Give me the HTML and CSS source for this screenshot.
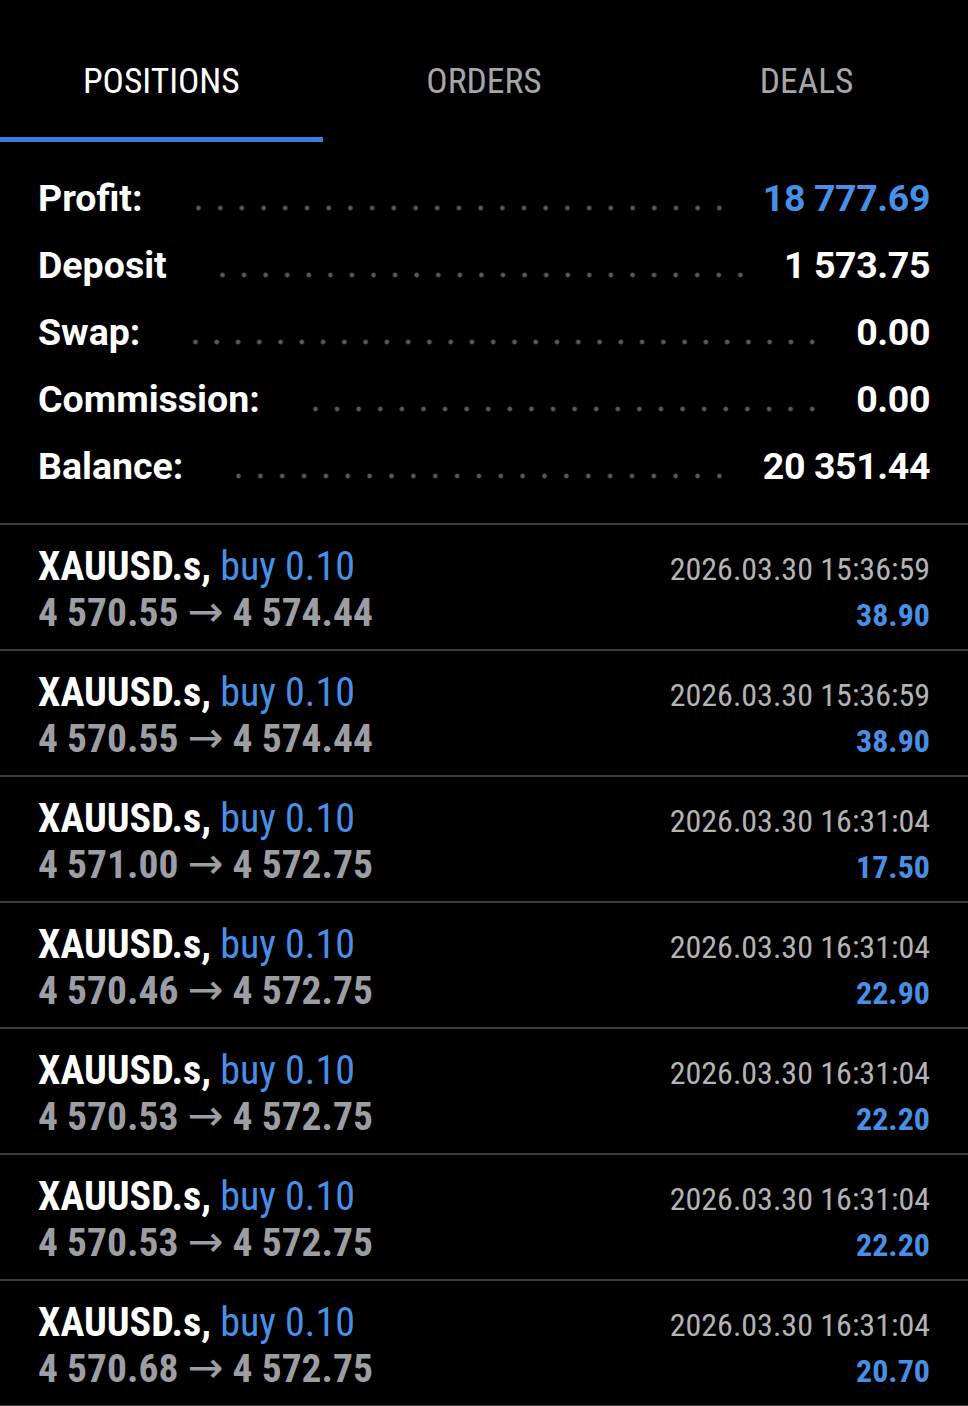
FILE: index.html
```html
<!DOCTYPE html>
<html>
<head>
    <title>Positions</title>
    <link rel="stylesheet" href="styles.css">
</head>
<body>
    <div class="tabs">
        <div class="tab active">POSITIONS</div>
        <div class="tab">ORDERS</div>
        <div class="tab">DEALS</div>
    </div>

    <div class="summary">
        <div class="sum-row"><span class="label">Profit:</span><span class="leader"></span><span class="value blue">18 777.69</span></div>
        <div class="sum-row"><span class="label">Deposit</span><span class="leader"></span><span class="value">1 573.75</span></div>
        <div class="sum-row"><span class="label">Swap:</span><span class="leader"></span><span class="value">0.00</span></div>
        <div class="sum-row"><span class="label">Commission:</span><span class="leader"></span><span class="value">0.00</span></div>
        <div class="sum-row"><span class="label">Balance:</span><span class="leader"></span><span class="value">20 351.44</span></div>
    </div>

    <div class="trades">
        <div class="trade">
            <div class="line"><span class="symbol">XAUUSD.s, <span class="side">buy 0.10</span></span><span class="time">2026.03.30 15:36:59</span></div>
            <div class="line"><span class="prices">4 570.55 <span class="arrow">→</span> 4 574.44</span><span class="pl">38.90</span></div>
        </div>
        <div class="trade">
            <div class="line"><span class="symbol">XAUUSD.s, <span class="side">buy 0.10</span></span><span class="time">2026.03.30 15:36:59</span></div>
            <div class="line"><span class="prices">4 570.55 <span class="arrow">→</span> 4 574.44</span><span class="pl">38.90</span></div>
        </div>
        <div class="trade">
            <div class="line"><span class="symbol">XAUUSD.s, <span class="side">buy 0.10</span></span><span class="time">2026.03.30 16:31:04</span></div>
            <div class="line"><span class="prices">4 571.00 <span class="arrow">→</span> 4 572.75</span><span class="pl">17.50</span></div>
        </div>
        <div class="trade">
            <div class="line"><span class="symbol">XAUUSD.s, <span class="side">buy 0.10</span></span><span class="time">2026.03.30 16:31:04</span></div>
            <div class="line"><span class="prices">4 570.46 <span class="arrow">→</span> 4 572.75</span><span class="pl">22.90</span></div>
        </div>
        <div class="trade">
            <div class="line"><span class="symbol">XAUUSD.s, <span class="side">buy 0.10</span></span><span class="time">2026.03.30 16:31:04</span></div>
            <div class="line"><span class="prices">4 570.53 <span class="arrow">→</span> 4 572.75</span><span class="pl">22.20</span></div>
        </div>
        <div class="trade">
            <div class="line"><span class="symbol">XAUUSD.s, <span class="side">buy 0.10</span></span><span class="time">2026.03.30 16:31:04</span></div>
            <div class="line"><span class="prices">4 570.53 <span class="arrow">→</span> 4 572.75</span><span class="pl">22.20</span></div>
        </div>
        <div class="trade">
            <div class="line"><span class="symbol">XAUUSD.s, <span class="side">buy 0.10</span></span><span class="time">2026.03.30 16:31:04</span></div>
            <div class="line"><span class="prices">4 570.68 <span class="arrow">→</span> 4 572.75</span><span class="pl">20.70</span></div>
        </div>
    </div>
</body>
</html>
```

FILE: styles.css
```css
html, body { background: #000; }
body { margin: 0; font-family: Roboto, "Noto Sans", sans-serif; color: #fff; }

.tabs { display: grid; grid-template-columns: 1fr 1fr 1fr; }
.tab { padding-top: 25px; line-height: 112px; border-bottom: 5px solid transparent; text-align: center; font-family: "Roboto Condensed", Roboto, sans-serif; font-size: 35.5px; color: #a6a6a8; }
.tab.active { color: #fff; border-bottom-color: #3b7de0; }

.summary { padding: 23px 38px; border-bottom: 2px solid #3c3c40; }
.sum-row { display: flex; align-items: baseline; font-size: 37.5px; font-weight: bold; line-height: 67px; }
.leader { flex: 1; height: 6px; margin: 0 33px 3px 45px; background: radial-gradient(circle, #5a5a5d 1.6px, transparent 3px) 0 0 / 21px 6px space no-repeat; }
.value { letter-spacing: -0.4px; }
.value.blue { color: #4a8fe6; }

.trade { height: 126px; box-sizing: border-box; padding: 20px 38px 0 38px; border-bottom: 2px solid #3c3c40; font-family: "Roboto Condensed", Roboto, sans-serif; }
.line { display: flex; justify-content: space-between; align-items: baseline; height: 44px; line-height: 44px; }
.symbol { font-size: 40px; font-weight: bold; color: #fff; }
.side { font-weight: normal; color: #4a8fe6; }
.prices { font-size: 39.5px; font-weight: bold; color: #9c9ea3; }
.arrow { font-family: "DejaVu Sans", sans-serif; font-weight: normal; font-size: 43px; }
.time { font-size: 32px; color: #b3b3b5; }
.pl { font-size: 32px; font-weight: bold; color: #4a8fe6; }
```
